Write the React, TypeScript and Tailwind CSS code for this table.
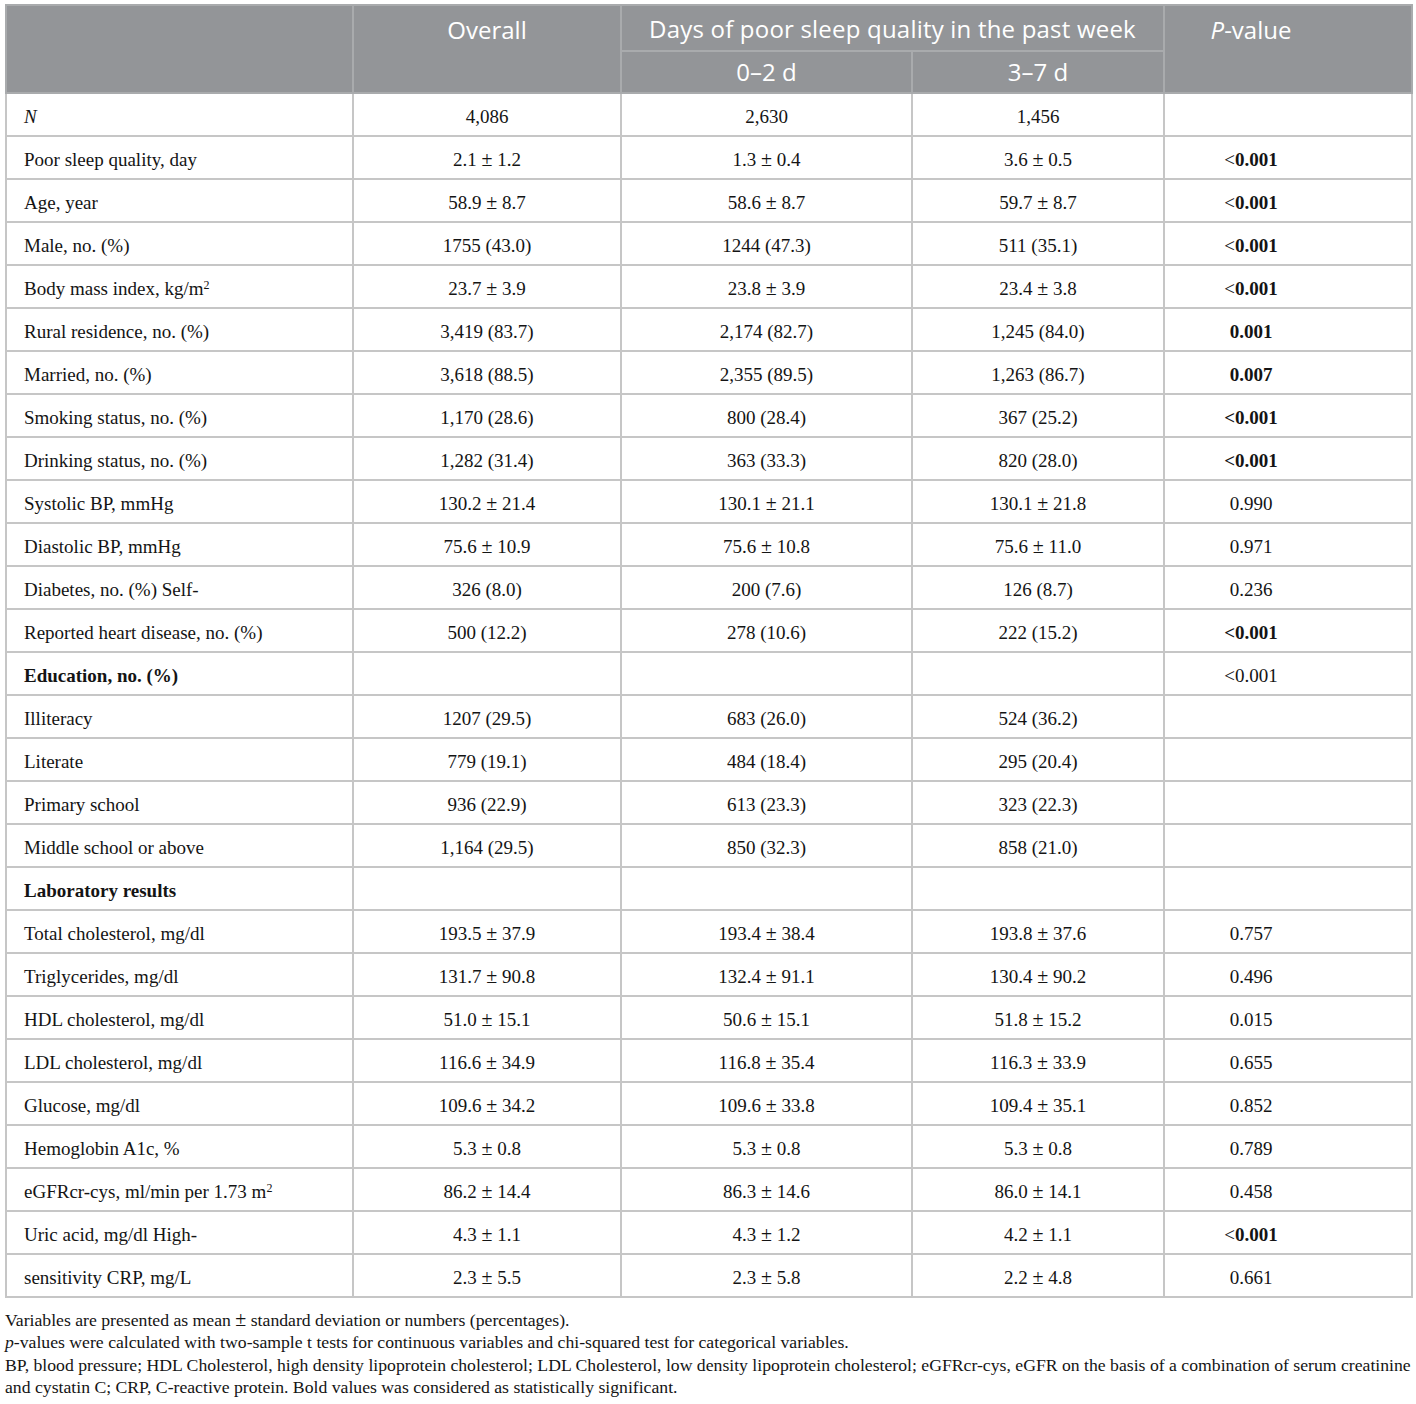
import React from "react";

type Row = {
  label: React.ReactNode;
  a?: React.ReactNode;
  b?: React.ReactNode;
  c?: React.ReactNode;
  p?: React.ReactNode;
  boldLabel?: boolean;
};

const Pm = () => <span className="text-[20px] leading-[0]">±</span>;
const V = (x: string, y: string) => (
  <>
    {x} <Pm /> {y}
  </>
);

const B = ({ v }: { v: string }) => <span className="font-bold">{v}</span>;
const PLess = () => (
  <>
    <span>{"<"}</span>
    <span className="font-bold">0.001</span>
  </>
);

const Sup = () => <sup className="text-[12px]">2</sup>;

const rows: Row[] = [
  { label: <i>N</i>, a: "4,086", b: "2,630", c: "1,456" },
  { label: "Poor sleep quality, day", a: V("2.1", "1.2"), b: V("1.3", "0.4"), c: V("3.6", "0.5"), p: <PLess /> },
  { label: "Age, year", a: V("58.9", "8.7"), b: V("58.6", "8.7"), c: V("59.7", "8.7"), p: <PLess /> },
  { label: "Male, no. (%)", a: "1755 (43.0)", b: "1244 (47.3)", c: "511 (35.1)", p: <PLess /> },
  {
    label: (
      <>
        Body mass index, kg/m<Sup />
      </>
    ),
    a: V("23.7", "3.9"),
    b: V("23.8", "3.9"),
    c: V("23.4", "3.8"),
    p: <PLess />,
  },
  { label: "Rural residence, no. (%)", a: "3,419 (83.7)", b: "2,174 (82.7)", c: "1,245 (84.0)", p: <B v="0.001" /> },
  { label: "Married, no. (%)", a: "3,618 (88.5)", b: "2,355 (89.5)", c: "1,263 (86.7)", p: <B v="0.007" /> },
  { label: "Smoking status, no. (%)", a: "1,170 (28.6)", b: "800 (28.4)", c: "367 (25.2)", p: <B v="<0.001" /> },
  { label: "Drinking status, no. (%)", a: "1,282 (31.4)", b: "363 (33.3)", c: "820 (28.0)", p: <B v="<0.001" /> },
  { label: "Systolic BP, mmHg", a: V("130.2", "21.4"), b: V("130.1", "21.1"), c: V("130.1", "21.8"), p: "0.990" },
  { label: "Diastolic BP, mmHg", a: V("75.6", "10.9"), b: V("75.6", "10.8"), c: V("75.6", "11.0"), p: "0.971" },
  { label: "Diabetes, no. (%) Self-", a: "326 (8.0)", b: "200 (7.6)", c: "126 (8.7)", p: "0.236" },
  { label: "Reported heart disease, no. (%)", a: "500 (12.2)", b: "278 (10.6)", c: "222 (15.2)", p: <B v="<0.001" /> },
  { label: "Education, no. (%)", boldLabel: true, p: "<0.001" },
  { label: "Illiteracy", a: "1207 (29.5)", b: "683 (26.0)", c: "524 (36.2)" },
  { label: "Literate", a: "779 (19.1)", b: "484 (18.4)", c: "295 (20.4)" },
  { label: "Primary school", a: "936 (22.9)", b: "613 (23.3)", c: "323 (22.3)" },
  { label: "Middle school or above", a: "1,164 (29.5)", b: "850 (32.3)", c: "858 (21.0)" },
  { label: "Laboratory results", boldLabel: true },
  { label: "Total cholesterol, mg/dl", a: V("193.5", "37.9"), b: V("193.4", "38.4"), c: V("193.8", "37.6"), p: "0.757" },
  { label: "Triglycerides, mg/dl", a: V("131.7", "90.8"), b: V("132.4", "91.1"), c: V("130.4", "90.2"), p: "0.496" },
  { label: "HDL cholesterol, mg/dl", a: V("51.0", "15.1"), b: V("50.6", "15.1"), c: V("51.8", "15.2"), p: "0.015" },
  { label: "LDL cholesterol, mg/dl", a: V("116.6", "34.9"), b: V("116.8", "35.4"), c: V("116.3", "33.9"), p: "0.655" },
  { label: "Glucose, mg/dl", a: V("109.6", "34.2"), b: V("109.6", "33.8"), c: V("109.4", "35.1"), p: "0.852" },
  { label: "Hemoglobin A1c, %", a: V("5.3", "0.8"), b: V("5.3", "0.8"), c: V("5.3", "0.8"), p: "0.789" },
  {
    label: (
      <>
        eGFRcr-cys, ml/min per 1.73 m<Sup />
      </>
    ),
    a: V("86.2", "14.4"),
    b: V("86.3", "14.6"),
    c: V("86.0", "14.1"),
    p: "0.458",
  },
  { label: "Uric acid, mg/dl High-", a: V("4.3", "1.1"), b: V("4.3", "1.2"), c: V("4.2", "1.1"), p: <PLess /> },
  { label: "sensitivity CRP, mg/L", a: V("2.3", "5.5"), b: V("2.3", "5.8"), c: V("2.2", "4.8"), p: "0.661" },
];

export default function App() {
  return (
    <div className="w-[1416px] h-[1404px] bg-white pt-[4px] pl-[5px] text-[#141414] [font-family:'Liberation_Serif',serif]">
      <table className="table-fixed border-collapse w-[1406px] border-2 border-[#bcc3bf]">
        <colgroup>
          <col className="w-[347px]" />
          <col className="w-[268px]" />
          <col className="w-[291px]" />
          <col className="w-[252px]" />
          <col className="w-[248px]" />
        </colgroup>
        <thead className="bg-[#939598] text-white text-[24px] font-normal [font-family:'Open_Sans',sans-serif]">
          <tr className="h-[46px]">
            <th rowSpan={2} className="border-2 border-[#a9abad] align-top"></th>
            <th rowSpan={2} className="border-2 border-[#a9abad] align-top pt-[6px] font-normal leading-[36px]">
              Overall
            </th>
            <th colSpan={2} className="border-2 border-[#a9abad] align-middle pt-[2px] font-normal leading-[36px] tracking-[0.2px]">
              Days of poor sleep quality in the past week
            </th>
            <th rowSpan={2} className="border-2 border-[#a9abad] align-top pt-[6px] pr-[74px] font-normal leading-[36px]">
              <i>P</i>-value
            </th>
          </tr>
          <tr className="h-[42px]">
            <th className="border-2 border-[#a9abad] font-normal leading-[36px]">0–2 d</th>
            <th className="border-2 border-[#a9abad] font-normal leading-[36px]">3–7 d</th>
          </tr>
        </thead>
        <tbody className="text-[19px]">
          {rows.map((r, i) => (
            <tr key={i} className="h-[43px]">
              <td className={`border-2 border-[#c6c6c6] pl-[17px] pt-[4px] leading-[22px] ${r.boldLabel ? "font-bold" : ""}`}>
                {r.label}
              </td>
              <td className="border-2 border-[#c6c6c6] text-center pt-[4px] leading-[22px]">{r.a}</td>
              <td className="border-2 border-[#c6c6c6] text-center pt-[4px] leading-[22px]">{r.b}</td>
              <td className="border-2 border-[#c6c6c6] text-center pt-[4px] leading-[22px]">{r.c}</td>
              <td className="border-2 border-[#c6c6c6] text-center pt-[4px] pr-[74px] leading-[22px]">{r.p}</td>
            </tr>
          ))}
        </tbody>
      </table>
      <div className="mt-[11px] text-[17.7px] leading-[22.3px] whitespace-nowrap">
        <div>
          Variables are presented as mean <Pm /> standard deviation or numbers (percentages).
        </div>
        <div>
          <i>p</i>-values were calculated with two-sample t tests for continuous variables and chi-squared test for categorical variables.
        </div>
        <div>
          BP, blood pressure; HDL Cholesterol, high density lipoprotein cholesterol; LDL Cholesterol, low density lipoprotein cholesterol; eGFRcr-cys, eGFR on the basis of a combination of serum creatinine
        </div>
        <div>and cystatin C; CRP, C-reactive protein. Bold values was considered as statistically significant.</div>
      </div>
    </div>
  );
}
